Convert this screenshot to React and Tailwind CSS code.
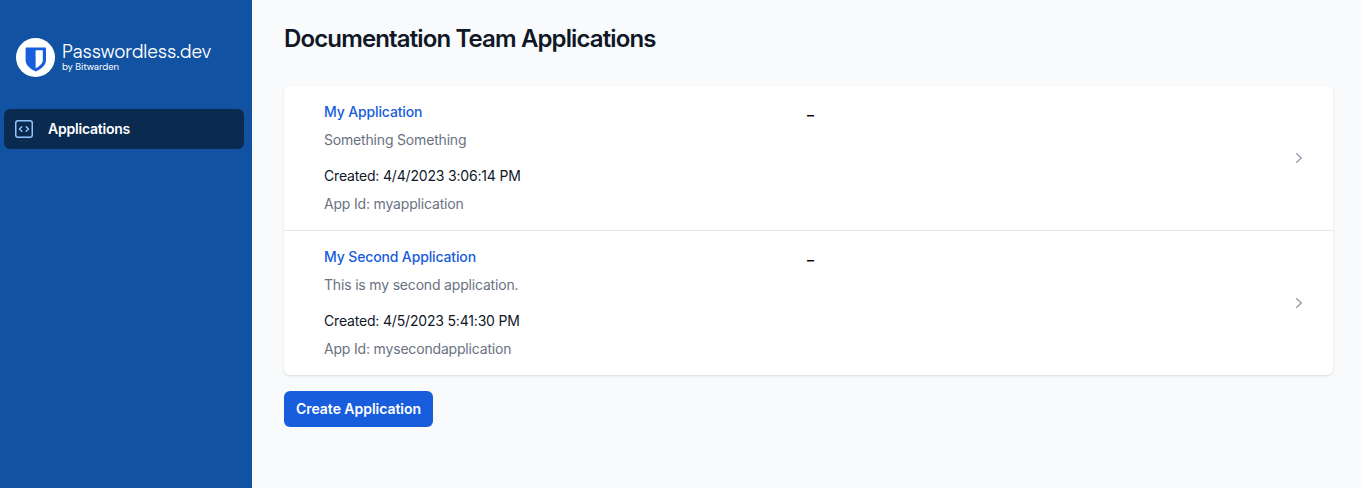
const applications = [
  { name: "My Application", description: "Something Something", created: "4/4/2023 3:06:14 PM", id: "myapplication" },
  { name: "My Second Application", description: "This is my second application.", created: "4/5/2023 5:41:30 PM", id: "mysecondapplication" },
];

function Logo() {
  return (
    <div className="flex h-[39px] items-center gap-[7px] pl-4 text-white">
      <svg className="size-[39px] shrink-0" viewBox="0 0 39 39" aria-hidden="true">
        <circle cx="19.5" cy="19.5" r="19.5" fill="#fff" />
        <path d="M10.600 9.500h18.400c.6 0 1 .4 1 1v11.800c0 5-5 8.900-10.200 11.200-5.200-2.300-10.200-6.200-10.200-11.200v-11.800c0-.6.4-1 1-1z" fill="#175ddc" />
        <path d="M19.600 12.300h7.200v10c0 3.400-3.600 6-7.200 8z" fill="#fff" />
      </svg>
      <div className="flex flex-col pb-[2px] font-['DM_Sans','Inter',sans-serif]">
        <span className="text-[19px] leading-[20px] font-light tracking-[-0.12px] whitespace-nowrap">Passwordless.dev</span>
        <span className="text-[9.5px] leading-[10px] tracking-[-0.05px] whitespace-nowrap">by Bitwarden</span>
      </div>
    </div>
  );
}

function ApplicationRow({ app }) {
  return (
    <li className="flex items-center gap-[15px] py-4 pr-6 pl-10">
      <div className="grid flex-1 grid-cols-2 gap-4 text-sm leading-5">
        <div className="tracking-[-0.18px]">
          <p className="font-medium tracking-[-0.14px] text-[#175ddc]">{app.name}</p>
          <p className="mt-2 text-gray-500">{app.description}</p>
          <p className="mt-4 text-gray-900">Created: {app.created}</p>
          <p className="mt-2 text-gray-500">App Id: {app.id}</p>
        </div>
        <div className="pt-[3px] font-semibold text-black">–</div>
      </div>
      <svg className="size-5 shrink-0 text-gray-400" viewBox="0 0 20 20" fill="currentColor" aria-hidden="true">
        <path fillRule="evenodd" d="M7.210 14.770a.75.75 0 01.02-1.060L11.168 10 7.230 6.290a.75.75 0 111.040-1.080l4.500 4.250a.75.75 0 010 1.080l-4.500 4.250a.75.75 0 01-1.060-.02z" clipRule="evenodd" />
      </svg>
    </li>
  );
}

export default function App() {
  return (
    <div className="flex h-screen overflow-hidden bg-[#f8fafc] font-['Inter',sans-serif] antialiased">
      <aside className="w-[252px] shrink-0 bg-[#1252a3] pt-[38px]">
        <Logo />
        <nav className="mt-8 pr-2 pl-1">
          <a className="flex h-10 items-center gap-3 rounded-md bg-[#0a2a50] px-2 text-sm font-semibold tracking-[-0.22px] text-white">
            <svg className="size-6" viewBox="0 0 24 24" fill="none" stroke="#93c5fd" strokeWidth="1.5" strokeLinecap="round" strokeLinejoin="round" aria-hidden="true">
              <path d="M14.250 9.750L16.500 12l-2.250 2.250m-4.500 0L7.500 12l2.250-2.250M6 20.250h12A2.250 2.250 0 0020.250 18V6A2.250 2.250 0 0018 3.750H6A2.250 2.250 0 003.750 6v12A2.250 2.250 0 006 20.250z" />
            </svg>
            Applications
          </a>
        </nav>
      </aside>
      <main className="flex-1 pt-[23px] pr-7 pl-8">
        <h1 className="text-2xl leading-8 font-semibold tracking-[-0.87px] text-gray-900">Documentation Team Applications</h1>
        <ul className="mt-[31px] divide-y divide-gray-200 overflow-hidden rounded-md bg-white shadow-sm">
          {applications.map((app) => <ApplicationRow key={app.id} app={app} />)}
        </ul>
        <button className="mt-4 h-9 rounded-md bg-[#175ddc] px-3 text-sm font-semibold tracking-[-0.04px] text-white">Create Application</button>
      </main>
    </div>
  );
}
